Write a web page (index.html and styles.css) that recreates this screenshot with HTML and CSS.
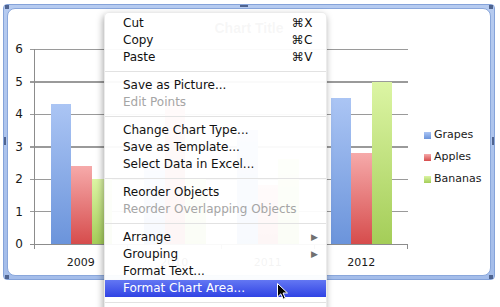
FILE: index.html
```html
<!DOCTYPE html>
<html lang="en">
<head>
  <meta charset="UTF-8">
  <title>Chart context menu</title>
  <link rel="stylesheet" href="styles.css">
</head>
<body>
  <div class="frame">
    <div class="chart">
      <div class="chart-title">Chart Title</div>
      <div class="chart-body">
        <div class="y-labels">
          <span>6</span><span>5</span><span>4</span><span>3</span><span>2</span><span>1</span><span>0</span>
        </div>
        <div class="plot-wrap">
          <div class="plot">
            <div class="bars">
              <div class="group">
                <div class="bar grapes" style="height:140px"></div>
                <div class="bar apples" style="height:78px"></div>
                <div class="bar bananas" style="height:65px"></div>
              </div>
              <div class="group">
                <div class="bar grapes" style="height:81px"></div>
                <div class="bar apples" style="height:143px"></div>
                <div class="bar bananas" style="height:65px"></div>
              </div>
              <div class="group">
                <div class="bar grapes" style="height:114px"></div>
                <div class="bar apples" style="height:59px"></div>
                <div class="bar bananas" style="height:85px"></div>
              </div>
              <div class="group">
                <div class="bar grapes" style="height:146px"></div>
                <div class="bar apples" style="height:91px"></div>
                <div class="bar bananas" style="height:162px"></div>
              </div>
            </div>
          </div>
          <div class="ticks"><i></i><i></i><i></i><i></i></div>
          <div class="cats">
            <span>2009</span><span>2010</span><span>2011</span><span>2012</span>
          </div>
        </div>
        <div class="legend">
          <div class="key"><b class="grapes"></b>Grapes</div>
          <div class="key"><b class="apples"></b>Apples</div>
          <div class="key"><b class="bananas"></b>Bananas</div>
        </div>
      </div>
    </div>

    <!-- selection grips -->
    <span class="grip g-tl"></span>
    <span class="grip g-tm"></span>
    <span class="grip g-tr"></span>
    <span class="grip g-ml"></span>
    <span class="grip g-mr"></span>
    <span class="grip g-bl"></span>
    <span class="grip g-br"></span>
  </div>

  <div class="menu">
    <div class="item"><span>Cut</span><span class="key-short">&#8984;X</span></div>
    <div class="item"><span>Copy</span><span class="key-short">&#8984;C</span></div>
    <div class="item"><span>Paste</span><span class="key-short">&#8984;V</span></div>
    <div class="sep"></div>
    <div class="item"><span>Save as Picture...</span></div>
    <div class="item disabled"><span>Edit Points</span></div>
    <div class="sep"></div>
    <div class="item"><span>Change Chart Type...</span></div>
    <div class="item"><span>Save as Template...</span></div>
    <div class="item"><span>Select Data in Excel...</span></div>
    <div class="sep"></div>
    <div class="item"><span>Reorder Objects</span></div>
    <div class="item disabled"><span>Reorder Overlapping Objects</span></div>
    <div class="sep"></div>
    <div class="item"><span>Arrange</span><span class="arrow">&#9654;</span></div>
    <div class="item"><span>Grouping</span><span class="arrow">&#9654;</span></div>
    <div class="item"><span>Format Text...</span></div>
    <div class="item active"><span>Format Chart Area...</span></div>
    <div class="sep"></div>
  </div>

  <svg class="cursor" width="13" height="19" viewBox="0 0 13 19">
    <path d="M1.5 1.5 L1.5 15 L4.8 11.8 L7.3 17.2 L9.4 16.3 L7 11 L11.5 11 Z" fill="#000" stroke="#fff" stroke-width="1"/>
  </svg>
</body>
</html>
```

FILE: styles.css
```css
body {
  margin: 0;
  width: 500px;
  height: 307px;
  overflow: hidden;
  background: #fff;
  font-family: "DejaVu Sans", sans-serif;
  position: relative;
}

/* chart area with its selection border */
.frame {
  position: relative;
  box-sizing: border-box;
  width: 492px;
  height: 276px;
  margin: 4px 0 0 3px;
  padding: 3px;
  background: linear-gradient(#b6cbf0, #a4bdea);
  border: 1px solid #85a3d9;
  border-radius: 4px;
}

.chart {
  box-sizing: border-box;
  height: 100%;
  background: #fff;
  border: 1px solid #8aa7db;
  border-radius: 8px;
}

.chart-title {
  height: 16px;
  margin-top: 11px;
  line-height: 16px;
  text-align: center;
  font-family: "Liberation Sans", sans-serif;
  font-weight: bold;
  font-size: 14px;
  color: #595959;
}

.chart-body {
  display: flex;
  margin-top: 13px;
  font-size: 11px;
  color: #1a1a1a;
}

.y-labels {
  width: 22px;
  height: 209px;
  margin-top: -7px;
  display: flex;
  flex-direction: column;
  justify-content: space-between;
  font-size: 12px;
}
.y-labels span {
  height: 14px;
  line-height: 14px;
  text-align: right;
  padding-right: 7px;
}

.plot-wrap {
  width: 378px;
}

.plot {
  height: 195px;
  border-bottom: 1px solid #8c8c8c;
  background: repeating-linear-gradient(to bottom, #9a9a9a 0, #9a9a9a 1px, transparent 1px, transparent 32.5px);
}

.bars {
  display: flex;
  height: 100%;
  margin-left: 4px;
  border-left: 1px solid #8c8c8c;
}

.group {
  flex: 1;
  display: flex;
  justify-content: center;
  align-items: flex-end;
}

.bar {
  width: 20.5px;
}
.grapes {
  background: linear-gradient(#abc5f4, #6b94db);
}
.apples {
  background: linear-gradient(#f6aaaa, #d64c4c);
}
.bananas {
  background: linear-gradient(#dcf5a4, #a4cd58);
}

.ticks {
  display: flex;
  height: 4px;
  margin-left: 4px;
}
.ticks i {
  flex: 1;
  border-left: 1px solid #8c8c8c;
}
.ticks i:last-child {
  border-right: 1px solid #8c8c8c;
}

.cats {
  display: flex;
  margin: 7px 0 0 4px;
}
.cats span {
  flex: 1;
  text-align: center;
  line-height: 14px;
}

.legend {
  margin: 75px 0 0 16px;
}
.key {
  height: 22px;
  line-height: 22px;
  display: flex;
  align-items: center;
}
.key b {
  width: 7px;
  height: 7px;
  margin-right: 3px;
}

/* little dotted grips on the selection */
.grip {
  position: absolute;
  background-image: radial-gradient(circle, #4f6490 0.8px, transparent 1px);
  background-size: 2px 2px;
}
.g-tl { left: 1px; top: 0; width: 4px; height: 4px; }
.g-tm { left: 236px; top: 0; width: 8px; height: 2px; }
.g-tr { right: 1px; top: 0; width: 4px; height: 4px; }
.g-ml { left: 0; top: 132px; width: 2px; height: 8px; }
.g-mr { right: 0; top: 132px; width: 2px; height: 8px; }
.g-bl { left: 1px; bottom: 0; width: 4px; height: 4px; }
.g-br { right: 1px; bottom: 0; width: 4px; height: 4px; }

/* context menu */
.menu {
  position: absolute;
  left: 104px;
  top: 12px;
  width: 223px;
  height: 320px;
  box-sizing: border-box;
  padding-top: 2px;
  background: rgba(255, 255, 255, 0.95);
  border: 1px solid rgba(0, 0, 0, 0.08);
  border-radius: 5px 5px 0 0;
  box-shadow: -1px 3px 7px rgba(0, 0, 0, 0.35);
  font-size: 12px;
  color: #111;
}

.item {
  display: flex;
  justify-content: space-between;
  height: 17px;
  line-height: 17px;
  padding: 0 13px 0 18px;
}
.item.disabled {
  color: #a5a5a5;
}
.item.active {
  color: #fff;
  background: linear-gradient(#6377f3, #3043e4);
}

.key-short {
  letter-spacing: 0.5px;
}

.arrow {
  font-size: 9px;
  color: #707070;
  margin-right: -5px;
}

.sep {
  margin: 5px 0;
  border-top: 1px solid #e2e2e2;
}

.cursor {
  position: absolute;
  left: 276px;
  top: 282px;
}
```
